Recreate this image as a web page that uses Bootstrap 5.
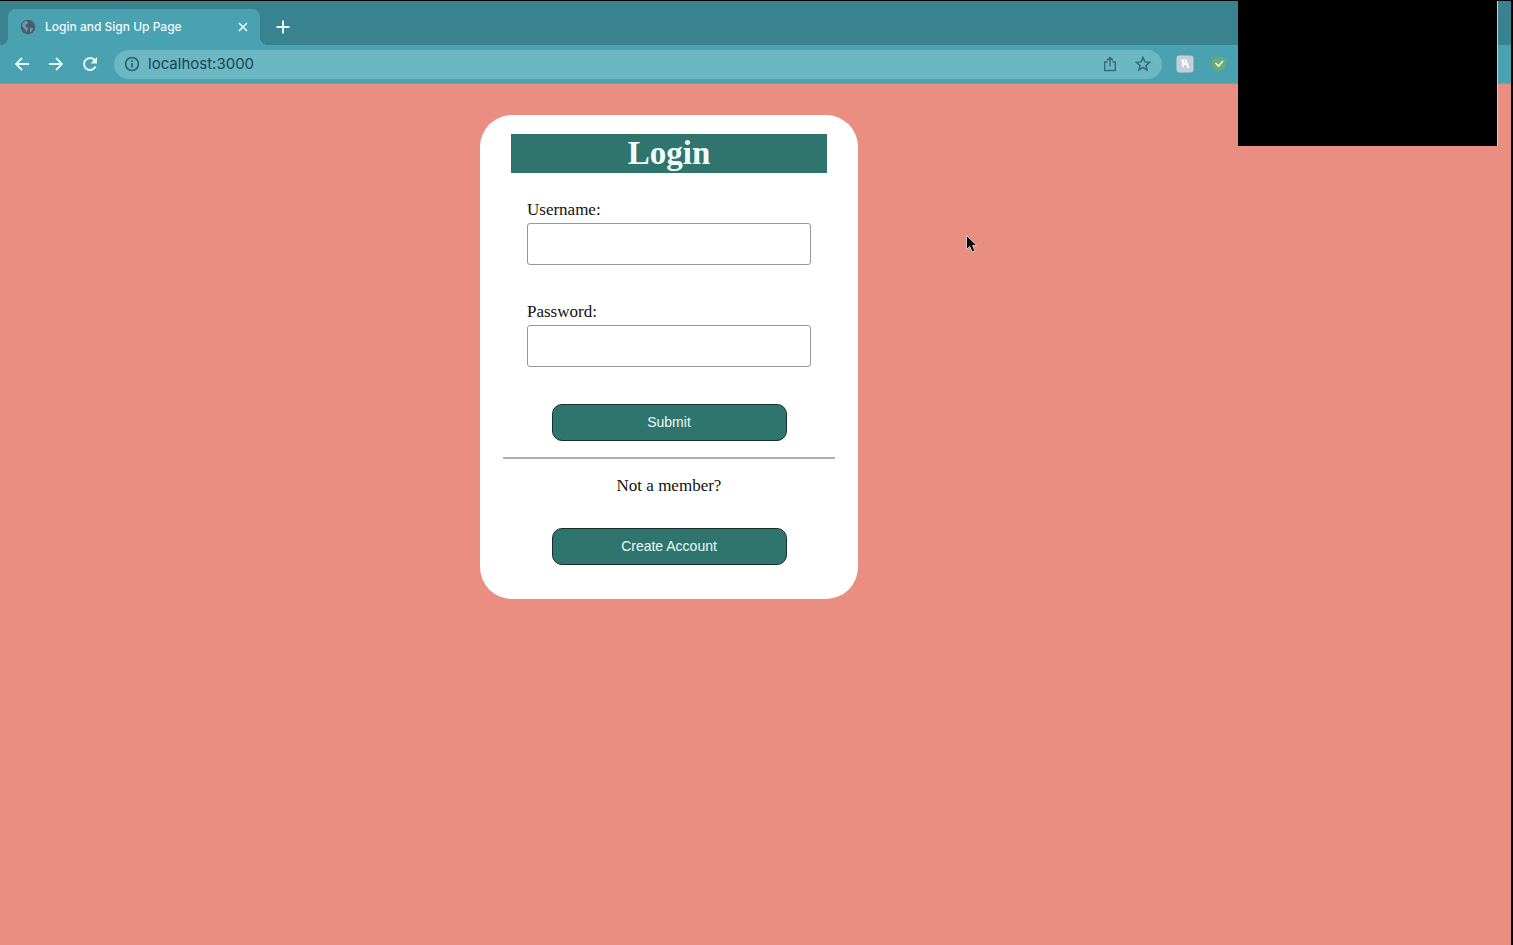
<!DOCTYPE html>
<html lang="en">
<head>
<meta charset="utf-8">
<meta name="viewport" content="width=device-width, initial-scale=1">
<title>Login and Sign Up Page</title>
<link href="https://cdn.jsdelivr.net/npm/bootstrap@5.3.0/dist/css/bootstrap.min.css" rel="stylesheet">
<style>
  body { font-family: "Liberation Serif", serif; background: #e98e80; border-top: 1px solid #000; border-right: 2px solid #000; color: #111; }
  .chrome-ui { font-family: Inter, sans-serif; background: #4aa2b1; height: 83px; border-bottom: 1px solid #7c9c9f; }
  .tab-strip { background: #398391; height: 44px; padding: 8px 8px 0; }
  .page-tab { width: 252px; height: 36px; border-radius: 8px 8px 0 0; background: #4aa2b1; color: #eefbfd; font-size: 12px; font-weight: 500; padding: 0 10px 0 12px; gap: 9px; }
  .page-tab::before, .page-tab::after { content: ""; position: absolute; bottom: 0; width: 8px; height: 8px; }
  .page-tab::before { right: 100%; background: radial-gradient(circle at 0 0, #398391 8px, #4aa2b1 8px); }
  .page-tab::after { left: 100%; background: radial-gradient(circle at 100% 0, #398391 8px, #4aa2b1 8px); }
  .icon-btn { background: none; border: 0; padding: 0; line-height: 0; color: #e0f8fb; }
  .icon-btn.ink { color: #356878; }
  .nav-icons { gap: 18px; }
  .toolbar-row { height: 38px; padding: 0 12px 0 14px; }
  .omnibox { height: 29px; border-radius: 15px; background: #6bb7c4; padding: 0 10px; gap: 8px; }
  .omnibox input { background: none; border: 0; outline: 0; padding: 0; font-size: 15px; color: #1b4450; min-width: 0; }
  .extensions { width: 337px; padding-left: 14px; gap: 16px; }
  .cover { top: 0; right: 13px; width: 260px; height: 145px; background: #000; border-right: 1px solid #dcc9bb; }
  .page-area { padding: 31px 173px 32px 0; }
  .login-card { width: 378px; border-radius: 32px; background: #fff; padding: 19px 23px 34px; }
  .login-card h1 { background: #30756d; color: #effcfa; font-size: 33px; line-height: 39px; margin: 0 8px 27px; font-weight: 700; }
  .field { margin: 0 24px 37px; }
  .field label { font-size: 17px; line-height: 20px; margin-bottom: 3px; }
  .field input { height: 42px; border: 1px solid #9b9797; border-radius: 3px; background: #fff; padding: 0 8px; }
  .action-btn { width: 235px; height: 37px; border: 1px solid #16302d; border-radius: 10px; background: #30756d; color: #eafaf8; font: 14px/33px "Liberation Sans", sans-serif; }
  .login-card hr { margin: 16px 0; border-top: 2px solid #aeb0b2; opacity: 1; }
  .login-card p { font-size: 17px; line-height: 21px; margin-bottom: 32px; }
  .pointer { left: 965px; top: 233px; }
</style>
</head>
<body class="min-vh-100 position-relative">
<header class="chrome-ui">
  <div class="tab-strip d-flex">
    <div class="page-tab position-relative d-flex align-items-center">
      <svg width="16" height="16" viewBox="0 0 16 16"><circle cx="8" cy="8" r="7.3" fill="#465f70"/><path d="M3 4l3-2 2 1-1 2-2 1 1 2 2 1-1 3-1 1-1-3-3-3zM10 9l3 0-1 3-2 1z" fill="#729aa7"/></svg>
      <span class="flex-grow-1 text-nowrap">Login and Sign Up Page</span>
      <button class="icon-btn" aria-label="Close tab"><svg width="14" height="14" viewBox="0 0 14 14" fill="none" stroke="currentColor" stroke-width="1.7"><path d="M3 3l8 8M11 3l-8 8"/></svg></button>
    </div>
    <button class="icon-btn ms-3" aria-label="New tab"><svg width="14" height="14" viewBox="0 0 14 14" fill="none" stroke="currentColor" stroke-width="2"><path d="M7 .5v13M.5 7h13"/></svg></button>
  </div>
  <div class="toolbar-row d-flex align-items-center">
    <nav class="nav-icons d-flex me-3">
      <button class="icon-btn" aria-label="Back"><svg width="16" height="16" viewBox="0 0 16 16" fill="none" stroke="currentColor" stroke-width="1.8"><path d="M15 8H2.5M8 2L2 8l6 6"/></svg></button>
      <button class="icon-btn" aria-label="Forward"><svg width="16" height="16" viewBox="0 0 16 16" fill="none" stroke="currentColor" stroke-width="1.8"><path d="M1 8h12.500M8 2l6 6-6 6"/></svg></button>
      <button class="icon-btn" aria-label="Reload"><svg width="16" height="16" viewBox="0 0 16 16"><path d="M13.500 10.500A6 6 0 1 1 12.500 4" fill="none" stroke="currentColor" stroke-width="2"/><path d="M15 1v6.500H8.500z" fill="currentColor"/></svg></button>
    </nav>
    <div class="omnibox d-flex align-items-center flex-grow-1">
      <svg width="16" height="16" viewBox="0 0 16 16" fill="none" stroke="#2d5c6b" stroke-width="1.6"><circle cx="8" cy="8" r="6.500"/><path d="M8 7v4.500M8 4.200v1.700"/></svg>
      <input class="flex-grow-1" type="text" value="localhost:3000" aria-label="Address">
      <button class="icon-btn ink" aria-label="Share"><svg width="16" height="16" viewBox="0 0 16 16" fill="none" stroke="currentColor" stroke-width="1.4"><path d="M5.500 6H2.700v8.500h10.600V6h-2.800M8 10.500V2M5 4.500l3-3 3 3"/></svg></button>
      <button class="icon-btn ink ms-2" aria-label="Bookmark"><svg width="18" height="18" viewBox="0 0 18 18" fill="none" stroke="currentColor" stroke-width="1.500"><path d="M9 2.500l1.900 4.400 4.700.4-3.600 3.100 1.100 4.600L9 12.500 4.900 15 6 10.400 2.400 7.300l4.700-.4z"/></svg></button>
    </div>
    <div class="extensions d-flex align-items-center">
      <button class="icon-btn" aria-label="Extension"><svg width="18" height="18" viewBox="0 0 18 18"><rect x=".5" y=".5" width="17" height="17" rx="3" fill="#c9cdd8"/><path d="M5.500 5.500h3M7 5v7M10 4.500v4.500M8 9h3l1.500 4" fill="none" stroke="#fff" stroke-width="1.800"/></svg></button>
      <button class="icon-btn" aria-label="Safe site"><svg width="18" height="18" viewBox="0 0 18 18"><path d="M2 2.500l7-1 7 1v7q0 4-7 7-7-3-7-7z" fill="#68ab7c"/><path d="M5.500 8l3 3 4.500-5" fill="none" stroke="#e6ffe0" stroke-width="1.700"/></svg></button>
    </div>
  </div>
</header>
<main class="page-area d-flex justify-content-center">
  <form class="login-card text-center">
    <h1>Login</h1>
    <div class="field text-start">
      <label class="d-block" for="user">Username:</label>
      <input class="w-100 d-block" id="user" type="text">
    </div>
    <div class="field text-start">
      <label class="d-block" for="pass">Password:</label>
      <input class="w-100 d-block" id="pass" type="password">
    </div>
    <button class="action-btn d-block mx-auto" type="submit">Submit</button>
    <hr>
    <p>Not a member?</p>
    <button class="action-btn d-block mx-auto" type="button">Create Account</button>
  </form>
</main>
<div class="cover position-absolute"></div>
<svg class="pointer position-absolute" width="14" height="20" viewBox="0 0 14 20"><path d="M1.500 1.500v14l3.300-3 2.300 5.500 2.800-1.200-2.300-5.300h4.300z" fill="#0b0b0b" stroke="#d9c2bd" stroke-width="1"/></svg>
<script src="https://cdn.jsdelivr.net/npm/bootstrap@5.3.0/dist/js/bootstrap.bundle.min.js"></script>
</body>
</html>
